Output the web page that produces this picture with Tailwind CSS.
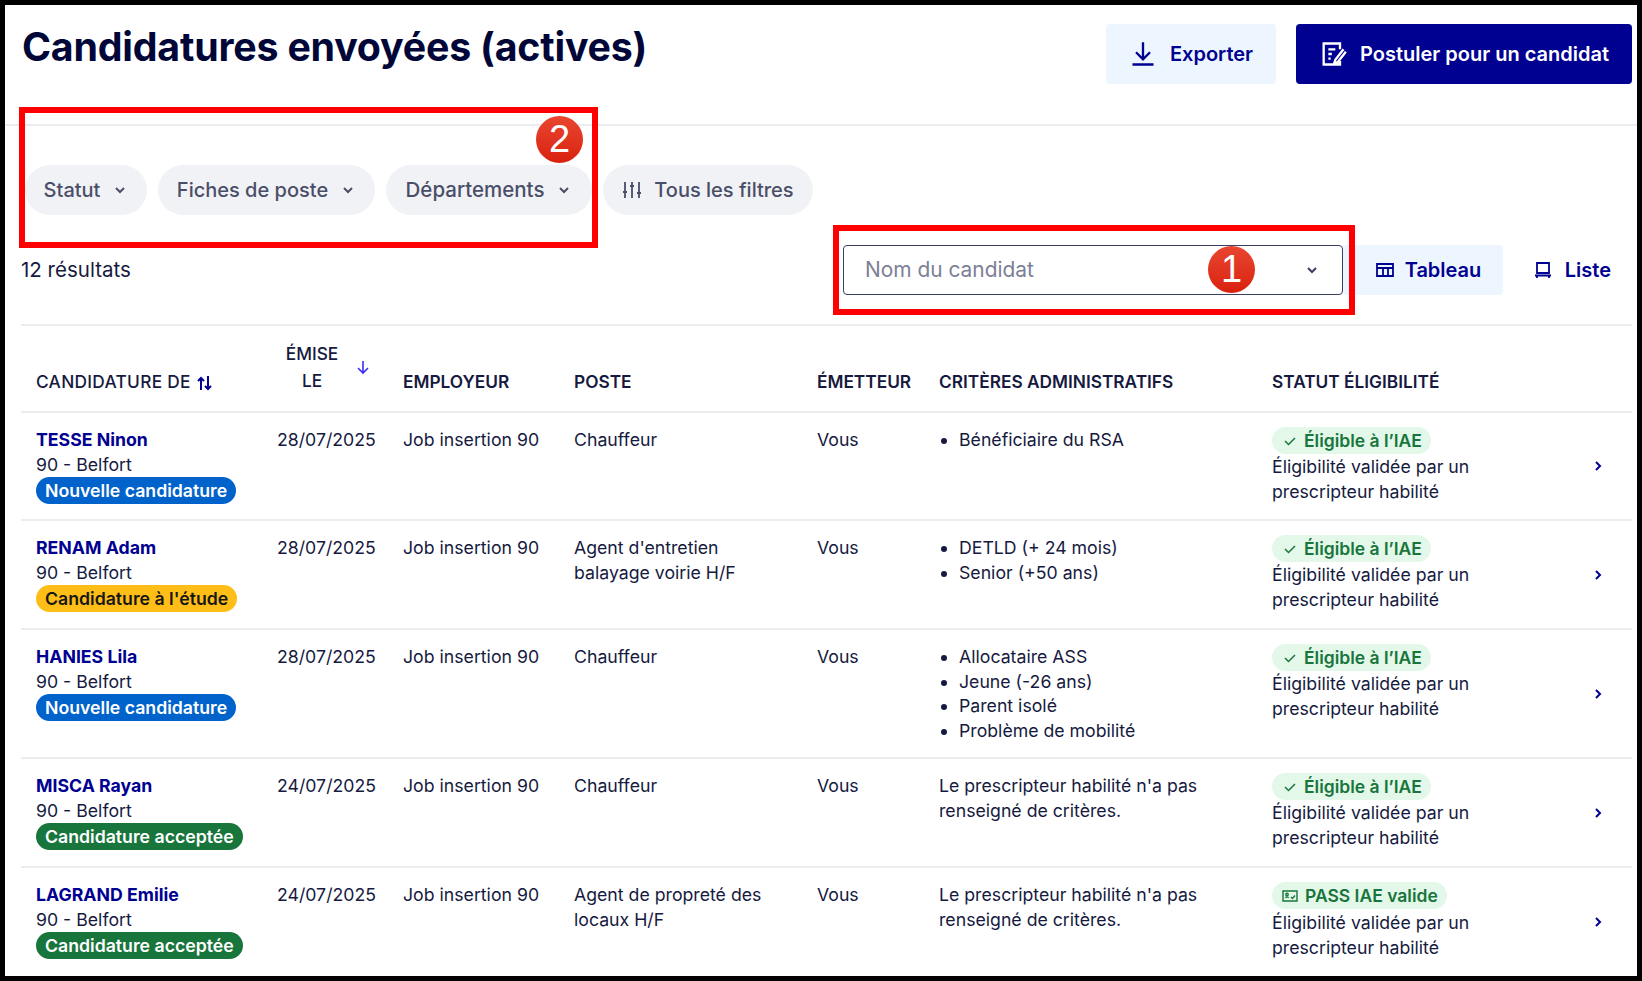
<!doctype html>
<html lang="fr">
  <head>
    <meta charset="UTF-8" />
    <title>Candidatures envoyées (actives)</title>
    <script src="https://cdn.jsdelivr.net/npm/@tailwindcss/browser@4"></script>
  </head>
  <body class="bg-white font-['Inter',sans-serif] text-[#161a40]">
    <div class="relative w-[1642px] h-[981px] overflow-hidden border-[5px] border-black bg-white">
      <!-- page header -->
      <header class="flex justify-between h-[121px] border-b-2 border-[#ececf0] pl-[17px] pr-[5px]">
        <h1 class="mt-[17px] text-[39.3px] leading-[50px] font-bold text-[#000638] tracking-[-0.2px]">Candidatures envoyées (actives)</h1>
        <div class="flex gap-[20px] mt-[19px] h-[60px]">
          <button class="flex items-center gap-[13px] w-[170px] justify-center rounded bg-[#edf5fe] text-[#000091] text-[20px] font-semibold">
            <svg class="w-[28px] h-[28px]" viewBox="0 0 24 24" fill="none" stroke="currentColor" stroke-width="2"><path d="M12 2v14M6 10.5l6 6 6-6M3 21h18" /></svg>
            Exporter
          </button>
          <button class="flex items-center gap-[13px] w-[336px] justify-center rounded bg-[#000091] text-white text-[20px] font-semibold">
            <svg class="w-[28px] h-[28px]" viewBox="0 0 24 24" fill="none" stroke="currentColor" stroke-width="2"><path d="M18 8V3H4v18h14v-3M8 8h6M8 12h3M8 16h2M21 8l-7 9-1 3 3-1 7-9" /></svg>
            Postuler pour un candidat
          </button>
        </div>
      </header>

      <!-- filters -->
      <div class="flex gap-[11px] pl-[20px] mt-[39px] text-[20px] text-[#4a4e68] font-medium">
        <button class="flex items-center justify-center gap-[12px] h-[50px] w-[122px] rounded-full bg-[#f1f2f5]">Statut <svg class="w-[16px] h-[16px]" viewBox="0 0 16 16" fill="none" stroke="currentColor" stroke-width="2"><path d="M4 6l4 4 4-4" /></svg></button>
        <button class="flex items-center justify-center gap-[12px] h-[50px] w-[217px] rounded-full bg-[#f1f2f5]">Fiches de poste <svg class="w-[16px] h-[16px]" viewBox="0 0 16 16" fill="none" stroke="currentColor" stroke-width="2"><path d="M4 6l4 4 4-4" /></svg></button>
        <button class="flex items-center justify-center gap-[12px] h-[50px] w-[206px] rounded-full bg-[#f1f2f5] text-[20.5px]">Départements <svg class="w-[16px] h-[16px]" viewBox="0 0 16 16" fill="none" stroke="currentColor" stroke-width="2"><path d="M4 6l4 4 4-4" /></svg></button>
        <button class="flex items-center justify-center gap-[12px] h-[50px] w-[210px] rounded-full bg-[#f1f2f5]">
          <svg class="w-[20px] h-[20px]" viewBox="0 0 20 20" fill="none" stroke="currentColor" stroke-width="1.8"><path d="M3 2v16M10 2v16M17 2v16M1 12h4M8 6h4M15 13h4" /></svg>
          Tous les filtres
        </button>
      </div>

      <!-- results bar -->
      <div class="flex items-center justify-between h-[50px] mt-[30px] pl-[16px] pr-[26px]">
        <span class="text-[20.5px] text-[#161a40]">12 résultats</span>
        <div class="flex items-center">
          <div class="flex items-center justify-between w-[500px] h-[50px] rounded border border-[#3a3f63] pl-[21px] pr-[22px] text-[20.9px] text-[#7c7f95]">
            Nom du candidat
            <svg class="w-[16px] h-[16px] text-[#3a3f63]" viewBox="0 0 16 16" fill="none" stroke="currentColor" stroke-width="2"><path d="M4 6l4 4 4-4" /></svg>
          </div>
          <div class="flex items-center justify-center gap-[10px] w-[160px] h-[50px] pl-[10px] rounded bg-[#edf5fe] text-[20px] font-semibold text-[#000091]">
            <svg class="w-[20px] h-[20px]" viewBox="0 0 20 20" fill="none" stroke="currentColor" stroke-width="1.8"><path d="M2 4h16v12H2zM2 8h16M8 8v8M13 8v8" /></svg>
            Tableau
          </div>
          <div class="flex items-center justify-end gap-[12px] w-[108px] h-[50px] text-[20px] font-semibold text-[#000091]">
            <svg class="w-[20px] h-[20px]" viewBox="0 0 20 20" fill="none" stroke="currentColor" stroke-width="1.8"><path d="M4 3h12v10H4zM2 15.5h16M4 15.5V18M16 15.5V18" /></svg>
            Liste
          </div>
        </div>
      </div>

      <div class="mt-[29px] ml-[16px] w-[1611px] border-t-2 border-[#ececf0]"></div>

      <!-- table -->
      <table class="ml-[16px] w-[1611px] table-fixed border-collapse text-[17.7px] leading-[24.5px]">
        <colgroup>
          <col class="w-[256px]" />
          <col class="w-[126px]" />
          <col class="w-[171px]" />
          <col class="w-[243px]" />
          <col class="w-[122px]" />
          <col class="w-[333px]" />
          <col class="w-[320px]" />
          <col class="w-[40px]" />
        </colgroup>
        <thead>
          <tr class="h-[86px] border-b-2 border-[#ececf0] text-left text-[17.3px] font-semibold">
            <th class="pl-[15px] pt-[27px] font-medium whitespace-nowrap tracking-[0.3px]">CANDIDATURE DE <svg class="inline w-[18px] h-[18px] text-[#000091]" viewBox="0 0 18 18" fill="none" stroke="currentColor" stroke-width="2"><path d="M5 16V4M2 7l3-3 3 3M12 2v13M9 12l3 3 3-3" /></svg></th>
            <th class="pb-[4px] font-medium">
              <div class="flex items-center">
                <div class="w-[70px] text-center leading-[27px]">ÉMISE<br />LE</div>
                <svg class="ml-[8px] w-[16px] h-[16px] text-[#3b2ff0]" viewBox="0 0 16 16" fill="none" stroke="currentColor" stroke-width="1.6"><path d="M8 2v12M3 9l5 5 5-5" /></svg>
              </div>
            </th>
            <th class="pt-[27px] font-semibold">EMPLOYEUR</th>
            <th class="pt-[27px] font-semibold">POSTE</th>
            <th class="pt-[27px] font-semibold">ÉMETTEUR</th>
            <th class="pt-[27px] font-semibold whitespace-nowrap">CRITÈRES ADMINISTRATIFS</th>
            <th class="pt-[27px] font-semibold whitespace-nowrap">STATUT ÉLIGIBILITÉ</th>
            <th></th>
          </tr>
        </thead>
        <tbody class="align-top">
          <tr class="h-[108px] border-b-2 border-[#ececf0]">
            <td class="pl-[15px] pt-[15px]">
              <div class="font-bold text-[#000091]">TESSE Ninon</div>
              <div>90 - Belfort</div>
              <span class="inline-block rounded-full bg-[#0063cb] px-[9px] text-[17.7px] font-semibold leading-[27px] text-white whitespace-nowrap">Nouvelle candidature</span>
            </td>
            <td class="pt-[15px]">28/07/2025</td>
            <td class="pt-[15px]">Job insertion 90</td>
            <td class="pt-[15px] pr-[20px]">Chauffeur</td>
            <td class="pt-[15px]">Vous</td>
            <td class="pt-[15px]"><ul class="list-disc pl-[20px]"><li>Bénéficiaire du RSA</li></ul></td>
            <td class="pt-[14px]">
              <span class="inline-flex items-center gap-[6px] rounded-full bg-[#e3f8e9] pl-[10px] pr-[9px] text-[17.5px] font-semibold leading-[27px] text-[#18753c]"><svg class="w-[16px] h-[16px]" viewBox="0 0 16 16" fill="none" stroke="currentColor" stroke-width="1.5"><path d="M3 8l3.5 3.5L13 5" /></svg>Éligible à l’IAE</span>
              <div>Éligibilité validée par un<br />prescripteur habilité</div>
            </td>
            <td class="align-middle"><svg class="w-[12px] h-[12px] text-[#000091]" viewBox="0 0 12 12" fill="none" stroke="currentColor" stroke-width="2"><path d="M4 2l4 4-4 4" /></svg></td>
          </tr>
          <tr class="h-[109px] border-b-2 border-[#ececf0]">
            <td class="pl-[15px] pt-[15px]">
              <div class="font-bold text-[#000091]">RENAM Adam</div>
              <div>90 - Belfort</div>
              <span class="inline-block rounded-full bg-[#ffbe17] px-[9px] text-[17.7px] font-semibold leading-[27px] text-[#161616] whitespace-nowrap">Candidature à l'étude</span>
            </td>
            <td class="pt-[15px]">28/07/2025</td>
            <td class="pt-[15px]">Job insertion 90</td>
            <td class="pt-[15px] pr-[20px]">Agent d'entretien balayage voirie H/F</td>
            <td class="pt-[15px]">Vous</td>
            <td class="pt-[15px]"><ul class="list-disc pl-[20px]"><li>DETLD (+ 24 mois)</li><li>Senior (+50 ans)</li></ul></td>
            <td class="pt-[14px]">
              <span class="inline-flex items-center gap-[6px] rounded-full bg-[#e3f8e9] pl-[10px] pr-[9px] text-[17.5px] font-semibold leading-[27px] text-[#18753c]"><svg class="w-[16px] h-[16px]" viewBox="0 0 16 16" fill="none" stroke="currentColor" stroke-width="1.5"><path d="M3 8l3.5 3.5L13 5" /></svg>Éligible à l’IAE</span>
              <div>Éligibilité validée par un<br />prescripteur habilité</div>
            </td>
            <td class="align-middle"><svg class="w-[12px] h-[12px] text-[#000091]" viewBox="0 0 12 12" fill="none" stroke="currentColor" stroke-width="2"><path d="M4 2l4 4-4 4" /></svg></td>
          </tr>
          <tr class="h-[129px] border-b-2 border-[#ececf0]">
            <td class="pl-[15px] pt-[15px]">
              <div class="font-bold text-[#000091]">HANIES Lila</div>
              <div>90 - Belfort</div>
              <span class="inline-block rounded-full bg-[#0063cb] px-[9px] text-[17.7px] font-semibold leading-[27px] text-white whitespace-nowrap">Nouvelle candidature</span>
            </td>
            <td class="pt-[15px]">28/07/2025</td>
            <td class="pt-[15px]">Job insertion 90</td>
            <td class="pt-[15px] pr-[20px]">Chauffeur</td>
            <td class="pt-[15px]">Vous</td>
            <td class="pt-[15px]"><ul class="list-disc pl-[20px]"><li>Allocataire ASS</li><li>Jeune (-26 ans)</li><li>Parent isolé</li><li>Problème de mobilité</li></ul></td>
            <td class="pt-[14px]">
              <span class="inline-flex items-center gap-[6px] rounded-full bg-[#e3f8e9] pl-[10px] pr-[9px] text-[17.5px] font-semibold leading-[27px] text-[#18753c]"><svg class="w-[16px] h-[16px]" viewBox="0 0 16 16" fill="none" stroke="currentColor" stroke-width="1.5"><path d="M3 8l3.5 3.5L13 5" /></svg>Éligible à l’IAE</span>
              <div>Éligibilité validée par un<br />prescripteur habilité</div>
            </td>
            <td class="align-middle"><svg class="w-[12px] h-[12px] text-[#000091]" viewBox="0 0 12 12" fill="none" stroke="currentColor" stroke-width="2"><path d="M4 2l4 4-4 4" /></svg></td>
          </tr>
          <tr class="h-[109px] border-b-2 border-[#ececf0]">
            <td class="pl-[15px] pt-[15px]">
              <div class="font-bold text-[#000091]">MISCA Rayan</div>
              <div>90 - Belfort</div>
              <span class="inline-block rounded-full bg-[#18753c] px-[9px] text-[17.7px] font-semibold leading-[27px] text-white whitespace-nowrap">Candidature acceptée</span>
            </td>
            <td class="pt-[15px]">24/07/2025</td>
            <td class="pt-[15px]">Job insertion 90</td>
            <td class="pt-[15px] pr-[20px]">Chauffeur</td>
            <td class="pt-[15px]">Vous</td>
            <td class="pt-[15px]">Le prescripteur habilité n'a pas<br />renseigné de critères.</td>
            <td class="pt-[14px]">
              <span class="inline-flex items-center gap-[6px] rounded-full bg-[#e3f8e9] pl-[10px] pr-[9px] text-[17.5px] font-semibold leading-[27px] text-[#18753c]"><svg class="w-[16px] h-[16px]" viewBox="0 0 16 16" fill="none" stroke="currentColor" stroke-width="1.5"><path d="M3 8l3.5 3.5L13 5" /></svg>Éligible à l’IAE</span>
              <div>Éligibilité validée par un<br />prescripteur habilité</div>
            </td>
            <td class="align-middle"><svg class="w-[12px] h-[12px] text-[#000091]" viewBox="0 0 12 12" fill="none" stroke="currentColor" stroke-width="2"><path d="M4 2l4 4-4 4" /></svg></td>
          </tr>
          <tr class="h-[108px]">
            <td class="pl-[15px] pt-[15px]">
              <div class="font-bold text-[#000091]">LAGRAND Emilie</div>
              <div>90 - Belfort</div>
              <span class="inline-block rounded-full bg-[#18753c] px-[9px] text-[17.7px] font-semibold leading-[27px] text-white whitespace-nowrap">Candidature acceptée</span>
            </td>
            <td class="pt-[15px]">24/07/2025</td>
            <td class="pt-[15px]">Job insertion 90</td>
            <td class="pt-[15px] pr-[20px]">Agent de propreté des locaux H/F</td>
            <td class="pt-[15px]">Vous</td>
            <td class="pt-[15px]">Le prescripteur habilité n'a pas<br />renseigné de critères.</td>
            <td class="pt-[14px]">
              <span class="inline-flex items-center gap-[6px] rounded-full bg-[#e3f8e9] px-[9px] text-[17.5px] font-semibold leading-[27px] text-[#18753c]"><svg class="w-[18px] h-[18px]" viewBox="0 0 18 18" fill="none" stroke="currentColor" stroke-width="1.4"><path d="M2 4h14v10H2zM4.5 11c.3-1.5 2.7-1.5 3 0M10 10l1.5 1.5L14 8.5" /><circle cx="6" cy="7.5" r="1.2" /></svg>PASS IAE valide</span>
              <div>Éligibilité validée par un<br />prescripteur habilité</div>
            </td>
            <td class="align-middle"><svg class="w-[12px] h-[12px] text-[#000091]" viewBox="0 0 12 12" fill="none" stroke="currentColor" stroke-width="2"><path d="M4 2l4 4-4 4" /></svg></td>
          </tr>
        </tbody>
      </table>

      <!-- annotations drawn over the screenshot -->
      <div class="absolute left-[14px] top-[102px] w-[579px] h-[141px] border-[6px] border-[#ff0000]"></div>
      <div class="absolute left-[828px] top-[220px] w-[522px] h-[90px] border-[6px] border-[#ff0000]"></div>
      <div class="absolute left-[531px] top-[111px] flex items-center justify-center w-[47px] h-[47px] rounded-full bg-linear-to-b from-[#e8452f] to-[#d9200c] font-['Liberation_Sans',sans-serif] text-[38px] text-white">2</div>
      <div class="absolute left-[1203px] top-[241px] flex items-center justify-center w-[47px] h-[47px] rounded-full bg-linear-to-b from-[#e8452f] to-[#d9200c] font-['Liberation_Sans',sans-serif] text-[38px] text-white">1</div>
    </div>
  </body>
</html>
